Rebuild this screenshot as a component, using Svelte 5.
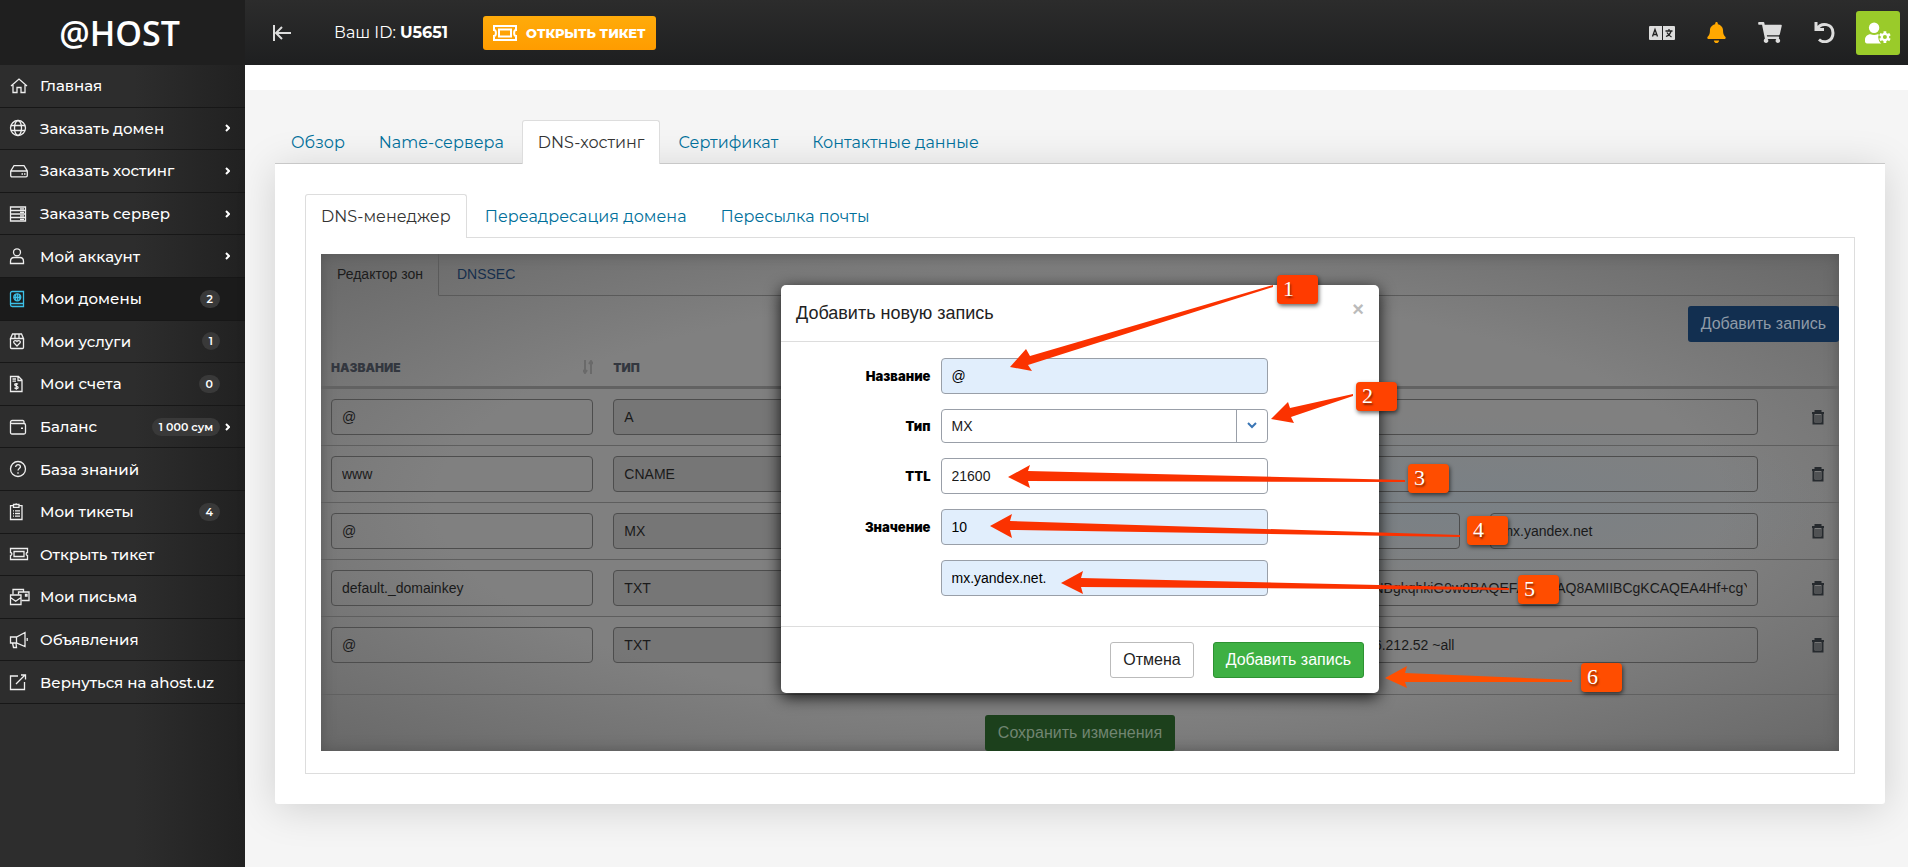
<script>
  const menu = [
    { title: "Главная", icon: '<path d="M2 9 10 2l8 7M4 8v7.500h4v-5h4v5h4V8"/>' },
    { title: "Заказать домен", arrow: true, icon: '<circle cx="9" cy="9" r="7.500"/><ellipse cx="9" cy="9" rx="3.500" ry="7.500"/><path d="M2 6.500h14M2 11.500h14"/>' },
    { title: "Заказать хостинг", arrow: true, icon: '<path d="M1.700 9 5 3.700h10L18.300 9v4.500c0 .9-.4 1.300-1.300 1.300H3c-.9 0-1.300-.4-1.300-1.300zM1.700 9h16.600M12.500 12h1.500M15 12h1.500"/>' },
    { title: "Заказать сервер", arrow: true, icon: '<path d="M1.500 2h15v14h-15zM1.500 5.500h15M1.500 9h15M1.500 12.500h15M11 3.800h4M11 7.300h4M11 10.800h4M11 14.300h4"/>' },
    { title: "Мой аккаунт", arrow: true, icon: '<circle cx="8" cy="5.300" r="3.500"/><path d="M1.500 16.500v-2c0-2.600 1.400-4 3.500-4h6c2.100 0 3.500 1.400 3.500 4v2z"/>' },
    { title: "Мои домены", badge: "2", active: true, icon: '<path d="M14.500 1.500H3.200c-1 0-1.700.6-1.700 1.500v11.800c0 1 .7 1.700 1.700 1.700h11.300zM1.700 13.500h12.800"/><circle cx="8.300" cy="7.300" r="3.500"/><path d="M4.800 7.300h7M8.300 3.800v7M6.500 4.500c-.7 2-.7 3.800 0 5.600M10 4.500c.7 2 .7 3.800 0 5.600"/>' },
    { title: "Мои услуги", badge: "1", icon: '<path d="M1.500 6.500v9c0 .6.400 1 1 1h11c.6 0 1-.4 1-1v-9M1.500 6.500 3.500 2h9l2 4.500zM6 2v4.500M10 2v4.500"/><path d="M8 14 4.800 10.700c-.7-1.800 1.700-3 3.200-1.300 1.500-1.700 3.900-.5 3.200 1.300z"/>' },
    { title: "Мои счета", badge: "0", icon: '<path d="M1.500 1.500h8l3.500 3.500v11.500H1.500zM9 1.500v4h4M3.500 4h3.500M3.500 6.200h3.500"/><path d="M9 9.300c-1.500-1.200-3.300-.7-3.300.5 0 1.600 3.400.8 3.400 2.600 0 1.300-2.100 1.700-3.600.4M7.300 8v6.700"/>' },
    { title: "Баланс", badge: "1 000 сум", arrow: true, icon: '<path d="M15 5.500V3.800c0-.8-.5-1.300-1.300-1.300H3.200c-1 0-1.700.5-1.700 1.500s.7 1.500 1.700 1.500h11.600c1 0 1.700.5 1.700 1.500v7.500c0 .9-.6 1.500-1.500 1.500H3c-.9 0-1.500-.6-1.500-1.500V4"/><path d="M13 9.500v1.600" stroke-width="2"/>' },
    { title: "База знаний", icon: '<circle cx="9" cy="9" r="7.500"/><path d="M6.700 7c0-3.300 5-3 4.700-.1-.1 1.600-2.300 1.700-2.400 3.600M9 12.200v1.600"/>' },
    { title: "Мои тикеты", badge: "4", icon: '<path d="M4 2.700H1.500v13.800H13V2.700h-2.500M4.500 1.500h5.500v2.800H4.500zM7.200 1.500V.3M4 7.800h1M6 7.800h5M4 10.500h1M6 10.500h5M4 13.200h1M6 13.200h5"/>' },
    { title: "Открыть тикет", icon: '<path d="M1.500 3.500h17v4c-1.800 0-1.800 3 0 3v4h-17v-4c1.800 0 1.800-3 0-3zM5 6.500h10v5H5z"/>' },
    { title: "Мои письма", icon: '<path d="M4 6.500V1.500h10.500v2M12.500 12.500h7.500V4H9.500v2.500M16.500 6.500h1.500v1.700h-1.500z"/><path d="M1.500 7h10.500v9.500H1.500zM1.500 9.500l5.200 3.700L12 9.500"/>' },
    { title: "Объявления", icon: '<path d="M1.500 6h6L16 1.500v14L7.500 12h-6zM7.500 6v6M3.500 12l1 4.500h3L7 12M18.200 7v3"/>' },
    { title: "Вернуться на ahost.uz", icon: '<path d="M9 3H1.500v13.500h14V9M7 11l8.500-8.500M12 2h4.500v4.500"/>' }
  ];

  const outerTabs = ["Обзор", "Name-сервера", "DNS-хостинг", "Сертификат", "Контактные данные"];
  const innerTabs = ["DNS-менеджер", "Переадресация домена", "Пересылка почты"];

  const records = [
    { name: "@", type: "A", values: [""] },
    { name: "www", type: "CNAME", values: [""] },
    { name: "@", type: "MX", values: ["10", "mx.yandex.net"] },
    { name: "default._domainkey", type: "TXT", values: ["v=DKIM1; k=rsa; p=MIIBIjANBgkqhkiG9w0BAQEFAAOCAQ8AMIIBCgKCAQEA4Hf+cgY"] },
    { name: "@", type: "TXT", values: ["v=spf1 +a +mx +ip4:185.196.212.52 ~all"] }
  ];

  // шаги подсказок: координаты от угла окна
  const steps = [
    { x: 496, y: -10, color: "#ff3b00", arrow: "229,82 245,64 249,71 492,0 492,2 247,80 251,86" },
    { x: 575, y: 97, color: "#ff4200", arrow: "490,134 507,117 509,123 572,109 572,111 510,132 513,138" },
    { x: 627, y: 179, color: "#ff4d00", arrow: "227,192 249,180 247,186 624,195 624,197 247,196 249,203" },
    { x: 686, y: 231, color: "#ff4d00", arrow: "209,241 231,229 229,236 679,250 679,252 229,245 231,253" },
    { x: 737, y: 290, color: "#ff4d00", arrow: "280,298 302,286 300,293 728,303 728,305 300,302 302,309" },
    { x: 800, y: 378, color: "#ff4d00", arrow: "604,393 626,381 624,388 791,395 791,397 624,397 626,403" }
  ];
</script>

{#snippet ticket()}
  <svg width="24" height="16" viewBox="0 0 24 16" fill="none" stroke="currentColor" stroke-width="2">
    <path d="M1 1h22v4c-2.500 0-2.500 6 0 6v4H1v-4c2.500 0 2.500-6 0-6zM6 4.500h12v7H6z" />
  </svg>
{/snippet}

<div class="layout">
  <aside class="sidebar">
    <a class="logo" href="#home">@HOST</a>
    <ul class="menu">
      {#each menu as item}
        <li class:active={item.active}>
          <a href="#menu">
            <svg class="menu-icon" width="22" height="18" viewBox="0 0 22 18">{@html item.icon}</svg>
            <span class="menu-title">{item.title}</span>
            {#if item.badge}
              <span class="badge">{item.badge}</span>
            {/if}
            <span class="menu-arrow">
              {#if item.arrow}
                <svg width="5" height="8" viewBox="0 0 5 8" fill="none" stroke="#fff" stroke-width="2"><path d="m1 1 3 3-3 3" /></svg>
              {/if}
            </span>
          </a>
        </li>
      {/each}
    </ul>
  </aside>

  <div class="main">
    <header class="topbar">
      <button class="icon-btn collapse" aria-label="Свернуть меню">
        <svg width="20" height="16" viewBox="0 0 20 16" fill="none" stroke="#ddd" stroke-width="2"><path d="M2 0v16M19 8H4M10 2 4 8l6 6" /></svg>
      </button>
      <div class="client-id">Ваш ID: <b>U5651</b></div>
      <button class="ticket-btn">{@render ticket()}<span>Открыть тикет</span></button>

      <div class="actions">
        <button class="icon-btn" aria-label="Язык">
          <svg width="26" height="14" viewBox="0 0 26 14">
            <rect width="26" height="14" rx="1" fill="#ddd" />
            <path d="M13.500 0v14" stroke="#222" />
            <path d="m3.500 10.500 2.500-7 2.500 7M4.500 8.500h3M16.500 5h7M20 3v2M17 10.500c3-1 4.500-3 5-5.500M18 6.500c1 2 2.500 3.300 4.500 4.500" fill="none" stroke="#222" stroke-width="1.300" />
          </svg>
        </button>
        <button class="icon-btn" aria-label="Уведомления">
          <svg width="19" height="21" viewBox="0 0 448 512" fill="#ffa800"><path d="M224 512c35.300 0 64-28.700 64-64H160c0 35.300 28.700 64 64 64zm215.400-149.700c-19.300-20.800-55.500-52-55.500-154.300 0-77.700-54.500-139.900-127.900-155.200V32c0-17.700-14.300-32-32-32s-32 14.300-32 32v20.800C118.600 68.100 64.100 130.300 64.100 208c0 102.300-36.200 133.500-55.500 154.300C2.600 368.700 0 376.500 0 384c.1 16.400 13 32 32.100 32h383.800c19.100 0 32-15.600 32.100-32 0-7.500-2.600-15.300-8.600-21.700z" /></svg>
        </button>
        <button class="icon-btn" aria-label="Корзина">
          <svg width="24" height="21" viewBox="0 0 576 512" fill="#ddd"><path d="m528 301 47-208c3-15-8-29-23-29H159l-9-45C148 8 138 0 127 0H24C11 0 0 11 0 24v16c0 13 11 24 24 24h70l70 343c-17 10-28 28-28 49 0 31 25 56 56 56s56-25 56-56c0-16-6-30-17-40h210c-11 10-17 24-17 40 0 31 25 56 56 56s56-25 56-56c0-22-13-41-32-50l6-25c3-15-8-29-23-29H218l-7-32h293c11 0 21-8 24-19z" /></svg>
        </button>
        <button class="icon-btn" aria-label="Назад">
          <svg width="21" height="21" viewBox="0 0 21 21" fill="none" stroke="#ddd" stroke-width="3"><path d="M2 0v7.500h8M3 7c4-7 16-6 16 4 0 8.500-9 11-14 6.500" /></svg>
        </button>
        <button class="icon-btn user" aria-label="Профиль">
          <svg width="26" height="22" viewBox="0 0 640 512" fill="#fff">
            <circle cx="224" cy="128" r="128" />
            <path d="M313 288c-56 22-122 22-178 0C60 288 0 348 0 422v42c0 26 22 48 48 48h352c-40-30-60-60-50-110-20-40-10-60 10-100z" />
            <circle cx="490" cy="356" r="165" fill="#9acb2a" />
            <path fill-rule="evenodd" d="M456 212h68v44l34 20 40-22 34 60-38 22v40l38 22-34 60-40-22-34 20v44h-68v-44l-34-20-40 22-34-60 38-22v-40l-38-22 34-60 40 22 34-20zm34 94a50 50 0 1 0 0 100 50 50 0 0 0 0-100z" />
          </svg>
        </button>
      </div>
    </header>

    <div class="strip"></div>

    <div class="content">
      <nav class="tabs">
        {#each outerTabs as tab}
          <a href="#tab" class:current={tab === "DNS-хостинг"}>{tab}</a>
        {/each}
      </nav>

      <section class="card">
        <nav class="tabs">
          {#each innerTabs as tab}
            <a href="#tab" class:current={tab === "DNS-менеджер"}>{tab}</a>
          {/each}
        </nav>

        <div class="box">
          <div class="editor">
            <nav class="editor-tabs">
              <a href="#zone" class="selected">Редактор зон</a>
              <a href="#dnssec">DNSSEC</a>
            </nav>
            <div class="toolbar">
              <button class="btn blue">Добавить запись</button>
            </div>

            <table>
              <thead>
                <tr>
                  <th class="c-name">
                    <div class="sort">Название
                      <svg width="10" height="14" viewBox="0 0 10 14" fill="none" stroke="#6a6a6a" stroke-width="2"><path d="M2 0v12M0 10l2 3 2-3M8 14V2M6 4l2-3 2 3" /></svg>
                    </div>
                  </th>
                  <th class="c-type">Тип</th>
                  <th class="c-ttl"></th>
                  <th class="c-value"></th>
                  <th></th>
                </tr>
              </thead>
              <tbody>
                {#each records as r}
                  <tr>
                    <td><input aria-label="Название" value={r.name} /></td>
                    <td><input aria-label="Тип" value={r.type} disabled /></td>
                    <td><input aria-label="TTL" value="" /></td>
                    <td>
                      <div class="values">
                        {#each r.values as v}
                          <input aria-label="Значение" value={v} />
                        {/each}
                      </div>
                    </td>
                    <td>
                      <button class="trash" aria-label="Удалить">
                        <svg width="12" height="15" viewBox="0 0 12 15" fill="none" stroke="#262a2e"><path d="M0 3h12M3.500 3V1h5v2" stroke-width="2" /><path d="M1.500 4v9.500h9V4" stroke-width="2" /><path d="M4 5v7M6 5v7M8 5v7" /></svg>
                      </button>
                    </td>
                  </tr>
                {/each}
              </tbody>
            </table>

            <div class="save-row">
              <button class="btn dark-green">Сохранить изменения</button>
            </div>

            <div class="modal" role="dialog" aria-labelledby="modal-title">
              <div class="modal-head">
                <h4 id="modal-title">Добавить новую запись</h4>
                <button class="close" aria-label="Закрыть">×</button>
              </div>
              <form class="modal-body">
                <div class="field">
                  <label for="rec-name">Название</label>
                  <input id="rec-name" class="filled" value="@" />
                </div>
                <div class="field">
                  <label for="rec-type">Тип</label>
                  <div class="select">
                    <select id="rec-type">
                      <option>MX</option>
                      <option>A</option>
                      <option>CNAME</option>
                      <option>TXT</option>
                    </select>
                    <svg width="12" height="8" viewBox="0 0 12 8" fill="none" stroke="#3a76b5" stroke-width="2"><path d="m2 1 4 4 4-4" /></svg>
                  </div>
                </div>
                <div class="field">
                  <label for="rec-ttl">TTL</label>
                  <input id="rec-ttl" value="21600" />
                </div>
                <div class="field">
                  <label for="rec-value">Значение</label>
                  <input id="rec-value" class="filled" value="10" />
                </div>
                <div class="field">
                  <span class="no-label"></span>
                  <input aria-label="Сервер" class="filled" value="mx.yandex.net." />
                </div>
              </form>
              <div class="modal-foot">
                <button class="btn white">Отмена</button>
                <button class="btn green">Добавить запись</button>
              </div>

              <svg class="arrows" width="840" height="420" viewBox="0 0 840 420">
                {#each steps as s, i}
                  <polygon points={s.arrow} fill={i === 5 ? "#ff4f00" : "#fb3200"} />
                {/each}
              </svg>
              {#each steps as s, i}
                <span class="step" style="left: {s.x}px; top: {s.y}px; background: {s.color}">{i + 1}</span>
              {/each}
            </div>
          </div>
        </div>
      </section>
    </div>
  </div>
</div>

<style>
  :global(body) {
    margin: 0;
    background: #f5f5f5;
  }
  * {
    box-sizing: border-box;
  }
  .layout {
    display: flex;
    min-height: 100vh;
    font-family: Montserrat, Inter, sans-serif;
    font-size: 16px;
  }
  a {
    text-decoration: none;
  }
  button {
    cursor: pointer;
  }

  /* sidebar */
  .sidebar {
    flex: 0 0 245px;
    background: linear-gradient(to right, #2d2d2d 55%, #212121);
  }
  .logo {
    display: flex;
    align-items: center;
    justify-content: center;
    height: 65px;
    padding-right: 6px;
    background: #1f1f1f;
    color: #fff;
    font-family: "Open Sans", sans-serif;
    font-size: 34px;
    font-weight: 600;
    line-height: 40px;
  }
  .menu {
    display: grid;
    grid-auto-rows: 1fr;
    min-height: 639px;
    margin: 0;
    padding: 0;
    list-style: none;
  }
  .menu li {
    border-bottom: 1px solid #171717;
  }
  .menu li.active {
    background: #1b1b1b;
  }
  .menu a {
    display: flex;
    align-items: center;
    height: 100%;
    padding: 0 15px 0 9px;
    color: #fff;
    font-size: 15px;
    font-weight: 500;
  }
  .menu-icon {
    flex: none;
    margin-right: 9px;
    fill: none;
    stroke: #eee;
    stroke-width: 1.3;
  }
  .active .menu-icon {
    stroke: #3cc0e8;
  }
  .menu-title {
    flex: 1;
    white-space: nowrap;
  }
  .badge {
    padding: 0 7px;
    border-radius: 9px;
    background: #393939;
    font-size: 11px;
    font-weight: 600;
    line-height: 18px;
    white-space: nowrap;
  }
  .menu-arrow {
    display: flex;
    width: 10px;
    justify-content: flex-end;
  }

  /* topbar */
  .main {
    flex: 1;
    min-width: 0;
  }
  .topbar {
    display: flex;
    align-items: center;
    height: 65px;
    padding: 0 8px 0 27px;
    background: linear-gradient(#2c2c2c, #1e1f20);
    color: #fff;
  }
  .icon-btn {
    display: flex;
    align-items: center;
    justify-content: center;
    width: 54px;
    height: 44px;
    padding: 0;
    border: 0;
    background: none;
  }
  .collapse {
    width: 20px;
    margin-right: 42px;
  }
  .client-id {
    margin-right: 35px;
    font-size: 16px;
  }
  .ticket-btn {
    display: flex;
    align-items: center;
    gap: 9px;
    height: 34px;
    padding: 0 10px;
    border: 0;
    border-radius: 3px;
    background: linear-gradient(#ffab0a, #ff9c00);
    color: #fff;
    font-family: inherit;
    font-size: 13px;
    font-weight: 800;
    text-transform: uppercase;
    white-space: nowrap;
  }
  .actions {
    display: flex;
    margin-left: auto;
  }
  .user {
    width: 44px;
    margin-left: 5px;
    border-radius: 3px;
    background: #9acb2a;
  }
  .strip {
    height: 25px;
    background: #fff;
  }

  /* tabs */
  .content {
    padding: 30px 23px 40px 30px;
  }
  .tabs {
    position: relative;
    z-index: 1;
    display: flex;
    gap: 2px;
    margin-bottom: -1px;
  }
  .tabs a {
    padding: 0 15px;
    border: 1px solid transparent;
    border-bottom: 0;
    border-radius: 3px 3px 0 0;
    color: #006f9a;
    font-size: 16px;
    line-height: 43px;
    white-space: nowrap;
  }
  .tabs a.current {
    border-color: #ddd;
    background: #fff;
    color: #333;
  }
  .card {
    padding: 30px;
    border-top: 1px solid #c8c8c8;
    border-radius: 0 0 3px 3px;
    background: #fff;
    box-shadow: 0 5px 40px rgba(0, 0, 0, 0.15);
  }
  .box {
    padding: 16px 15px 22px;
    border: 1px solid #ddd;
  }

  /* zone editor */
  .editor {
    position: relative;
    background:
      radial-gradient(ellipse at 74% 50%, rgba(110, 130, 145, 0.35), transparent 25%),
      radial-gradient(ellipse at center, #808080 60%, #686868 100%);
    box-shadow: inset 0 0 14px #555;
    font-family: "Liberation Sans", Arial, sans-serif;
  }
  .editor-tabs {
    display: flex;
  }
  .editor-tabs a {
    flex: 1;
    padding: 0 18px;
    border-bottom: 1px solid #5a5a5a;
    color: #152e4c;
    font-size: 14px;
    line-height: 41px;
  }
  .editor-tabs a.selected {
    flex: none;
    padding: 0 15px 0 16px;
    border-right: 1px solid #5a5a5a;
    border-bottom-color: transparent;
    color: #1c1c1c;
  }
  .toolbar {
    display: flex;
    justify-content: flex-end;
    padding-top: 10px;
  }
  .btn {
    height: 36px;
    padding: 0 12px;
    border: 1px solid transparent;
    border-radius: 3px;
    font-family: inherit;
    font-size: 16px;
    white-space: nowrap;
  }
  .blue {
    background: #122f50;
    color: #8f9ba8;
  }
  .dark-green {
    background: #1c401c;
    color: #718571;
  }
  .white {
    border-color: #bbb;
    background: #fff;
    color: #222;
  }
  .green {
    border-color: #2d9232;
    background: #3eb043;
    color: #fff;
  }
  table {
    width: 100%;
    border-collapse: separate;
    border-spacing: 0;
    table-layout: fixed;
  }
  th {
    height: 47px;
    padding: 6px 10px 0;
    border-bottom: 3px solid #626262;
    color: #33373f;
    font-family: Inter, Arial, sans-serif;
    font-size: 12px;
    font-weight: 900;
    text-align: left;
    text-transform: uppercase;
  }
  .c-name,
  .c-type {
    width: 18.6%;
  }
  .c-ttl {
    width: 19.6%;
  }
  .c-value {
    width: 38.5%;
  }
  .sort {
    display: flex;
    align-items: center;
    justify-content: space-between;
  }
  td {
    padding: 10px;
    border-bottom: 1px solid #5e5e5e;
  }
  tr:last-child td {
    border-bottom-color: transparent;
  }
  input,
  select {
    display: block;
    width: 100%;
    height: 36px;
    padding: 0 10px;
    border: 1px solid #4d4d4d;
    border-radius: 4px;
    background: transparent;
    color: #1a1a1a;
    font-family: inherit;
    font-size: 14px;
  }
  input:disabled {
    background: rgba(80, 80, 80, 0.2);
  }
  .values {
    display: flex;
    gap: 30px;
  }
  .trash {
    display: block;
    width: 12px;
    height: 15px;
    margin-left: auto;
    margin-right: 5px;
    padding: 0;
    border: 0;
    background: none;
  }
  .save-row {
    display: flex;
    justify-content: center;
    margin-top: 20px;
    padding-top: 20px;
    border-top: 1px solid #606060;
  }

  /* modal */
  .modal {
    position: absolute;
    top: 31px;
    left: 50%;
    width: 598px;
    margin-left: -299px;
    border-radius: 5px;
    background: #fff;
    box-shadow: 0 4px 16px rgba(0, 0, 0, 0.85);
  }
  .modal-head {
    display: flex;
    align-items: center;
    justify-content: space-between;
    height: 57px;
    padding: 0 15px;
    border-bottom: 1px solid #ddd;
  }
  h4 {
    margin: 0;
    color: #222;
    font-size: 18px;
    font-weight: 400;
  }
  .close {
    width: 12px;
    padding: 0 0 8px;
    border: 0;
    background: none;
    color: #bbb;
    font-family: inherit;
    font-size: 20px;
    font-weight: 700;
    line-height: 20px;
  }
  .modal-body {
    display: flex;
    flex-direction: column;
    gap: 15px;
    padding: 16px 0 30px;
  }
  .field {
    display: flex;
    align-items: center;
    gap: 10px;
  }
  label,
  .no-label {
    width: 25%;
    color: #000;
    font-family: Inter, Arial, sans-serif;
    font-size: 13px;
    font-weight: 900;
    line-height: 34px;
    text-align: right;
  }
  .field input,
  .select {
    width: 327px;
    border: 1px solid #999fa8;
    border-radius: 4px;
    background: #fff;
  }
  .field input.filled {
    background: #e1eefc;
    color: #000;
  }
  .select {
    display: flex;
    align-items: center;
    height: 34px;
  }
  .select select {
    flex: 1;
    height: 32px;
    border: 0;
    border-right: 1px solid #999fa8;
    border-radius: 0;
    appearance: none;
  }
  .select svg {
    flex: none;
    margin: 0 9px;
  }
  .modal-foot {
    display: flex;
    justify-content: flex-end;
    gap: 19px;
    padding: 15px;
    border-top: 1px solid #ddd;
  }
  .arrows {
    position: absolute;
    top: 0;
    left: 0;
    overflow: visible;
    pointer-events: none;
  }
  .step {
    position: absolute;
    width: 41px;
    height: 29px;
    padding-left: 6px;
    border-radius: 4px;
    box-shadow: 1px 2px 4px rgba(0, 0, 0, 0.6);
    color: #fff;
    font-family: "Liberation Serif", serif;
    font-size: 22px;
    line-height: 27px;
    text-shadow: 1px 2px 2px rgba(0, 0, 0, 0.5);
  }
</style>
